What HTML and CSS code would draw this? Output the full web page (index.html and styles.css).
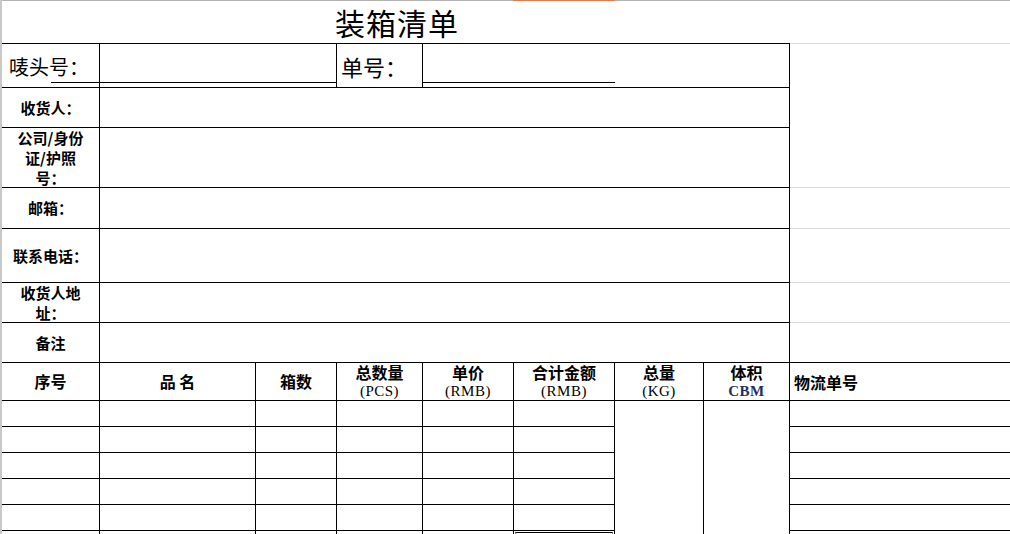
FILE: index.html
```html
<!DOCTYPE html>
<html lang="zh-CN">
<head>
<meta charset="utf-8">
<title>装箱清单</title>
<link rel="stylesheet" href="styles.css">
</head>
<body>
<div class="sheet">
  <div class="topbar"><span class="tab-mark"></span></div>
  <div class="grid">
    <!-- row 1: title -->
    <div class="title">装箱清单</div>
    <div class="blank"></div>

    <!-- row 2 -->
    <div class="cell top mark-label">唛头号：</div>
    <div class="cell top span2"></div>
    <div class="cell top no-label">单号：</div>
    <div class="cell top span4"></div>
    <div class="side side-first"></div>

    <!-- row 3 -->
    <div class="cell label">收货人：</div>
    <div class="cell span7"></div>

    <!-- row 4 -->
    <div class="cell label">公司/身份证/护照号：</div>
    <div class="cell span7"></div>

    <!-- row 5 -->
    <div class="cell label">邮箱：</div>
    <div class="cell span7"></div>
    <div class="side"></div>

    <!-- row 6 -->
    <div class="cell label">联系电话：</div>
    <div class="cell span7"></div>
    <div class="side"></div>

    <!-- row 7 -->
    <div class="cell label">收货人地址：</div>
    <div class="cell span7"></div>
    <div class="side"></div>

    <!-- row 8 -->
    <div class="cell label">备注</div>
    <div class="cell span7"></div>
    <div class="side side-dark"></div>

    <!-- row 9: table header -->
    <div class="cell head">序号</div>
    <div class="cell head">品 名</div>
    <div class="cell head">箱数</div>
    <div class="cell head">总数量<br><span class="latin">(PCS)</span></div>
    <div class="cell head">单价<br><span class="latin">(RMB)</span></div>
    <div class="cell head">合计金额<br><span class="latin">(RMB)</span></div>
    <div class="cell head">总量<br><span class="latin">(KG)</span></div>
    <div class="cell head">体积<br><span class="latin cbm">CBM</span></div>
    <div class="head-right">物流单号</div>

    <!-- row 10 -->
    <div class="cell"></div><div class="cell"></div><div class="cell"></div>
    <div class="cell"></div><div class="cell"></div><div class="cell"></div>
    <div class="cell tallcol"></div>
    <div class="cell tallcol"></div>
    <div class="wl"></div>

    <!-- row 11 -->
    <div class="cell"></div><div class="cell"></div><div class="cell"></div>
    <div class="cell"></div><div class="cell"></div><div class="cell"></div>
    <div class="wl"></div>

    <!-- row 12 -->
    <div class="cell"></div><div class="cell"></div><div class="cell"></div>
    <div class="cell"></div><div class="cell"></div><div class="cell"></div>
    <div class="wl"></div>

    <!-- row 13 -->
    <div class="cell"></div><div class="cell"></div><div class="cell"></div>
    <div class="cell"></div><div class="cell"></div><div class="cell"></div>
    <div class="wl"></div>

    <!-- row 14 -->
    <div class="cell"></div><div class="cell"></div><div class="cell"></div>
    <div class="cell"></div><div class="cell"></div><div class="cell"></div>
    <div class="wl"></div>

    <!-- row 15 (partial) -->
    <div class="cell open"></div><div class="cell open"></div><div class="cell open"></div>
    <div class="cell open"></div><div class="cell open"></div>
    <div class="cell open"><div class="selbox"></div></div>
    <div class="open-right"></div>
  </div>
  <div class="uline uline-a"></div>
  <div class="uline uline-b"></div>
</div>
</body>
</html>
```

FILE: styles.css
```css
html, body {
  margin: 0;
  padding: 0;
  background: #fff;
}
body {
  width: 1010px;
  height: 534px;
  overflow: hidden;
  font-family: "Liberation Serif", "Noto Sans CJK SC", serif;
  color: #000;
}
.sheet {
  position: relative;
  border-left: 2px solid #c8c8c8;
  height: 534px;
  box-sizing: border-box;
}
.topbar {
  height: 1px;
  background: #b4b4b4;
  display: flex;
}
.tab-mark {
  margin-left: 511px;
  width: 102px;
  height: 1px;
  background: #e07a4c;
}
.grid {
  display: grid;
  grid-template-columns: 98px 156px 81px 86px 91px 101px 89px 86px 220px;
  grid-template-rows: 42px 45px 40px 60px 41px 54px 40px 40px 38px 26px 26px 26px 26px 26px 20px;
}
.grid > div {
  box-sizing: border-box;
}
.title {
  grid-column: span 8;
  display: flex;
  align-items: center;
  justify-content: center;
  font-family: "Noto Sans CJK SC", sans-serif;
  font-size: 30px;
  font-weight: 400;
  letter-spacing: 1px;
  padding-left: 2px;
}
.cell {
  border-right: 1px solid #000;
  border-bottom: 1px solid #000;
}
.cell.top {
  border-top: 1px solid #000;
}
.span2 { grid-column: span 2; }
.span4 { grid-column: span 4; }
.span7 { grid-column: span 7; }

.mark-label {
  display: flex;
  align-items: flex-end;
  padding: 0 0 6px 7px;
  font-family: "Noto Sans CJK SC", sans-serif;
  font-size: 20px;
  line-height: 28px;
}
.no-label {
  display: flex;
  align-items: flex-end;
  padding: 0 0 6px 4px;
  font-family: "Noto Sans CJK SC", sans-serif;
  font-size: 22px;
  line-height: 30px;
}
.side {
  border-bottom: 1px solid #dadada;
}
.side-first {
  grid-row: span 3;
  border-top: 1px solid #dadada;
}
.side-dark {
  border-bottom: 1px solid #000;
}
.label {
  display: flex;
  align-items: center;
  justify-content: center;
  text-align: center;
  padding: 0 10px;
  font-family: "Noto Sans CJK SC", sans-serif;
  font-weight: 700;
  font-size: 15px;
  line-height: 20px;
}
.head {
  display: flex;
  flex-direction: column;
  align-items: center;
  justify-content: center;
  text-align: center;
  font-family: "Noto Sans CJK SC", sans-serif;
  font-weight: 700;
  font-size: 16px;
  line-height: 19px;
  white-space: pre;
}
.latin {
  font-family: "Liberation Serif", serif;
  font-weight: 400;
  font-size: 15px;
  line-height: 18px;
  letter-spacing: 0.5px;
}
.cbm {
  font-weight: 700;
  color: #1f3060;
}
.head-right {
  display: flex;
  align-items: center;
  padding-left: 4px;
  border-bottom: 1px solid #000;
  font-family: "Noto Sans CJK SC", sans-serif;
  font-weight: 700;
  font-size: 16px;
}
.tallcol {
  grid-row: span 6;
  border-bottom: none;
}
.wl {
  border-bottom: 1px solid #000;
}
.cell.open {
  border-bottom: none;
}
.selbox {
  margin: 1px 1px 0 1px;
  height: 10px;
  border-top: 1px solid #000;
  border-left: 1px solid #888;
  border-right: 1px solid #888;
}
.uline {
  position: absolute;
  top: 82px;
  height: 1px;
  background: #000;
}
.uline-a {
  left: 49px;
  width: 285px;
}
.uline-b {
  left: 421px;
  width: 192px;
}
```
